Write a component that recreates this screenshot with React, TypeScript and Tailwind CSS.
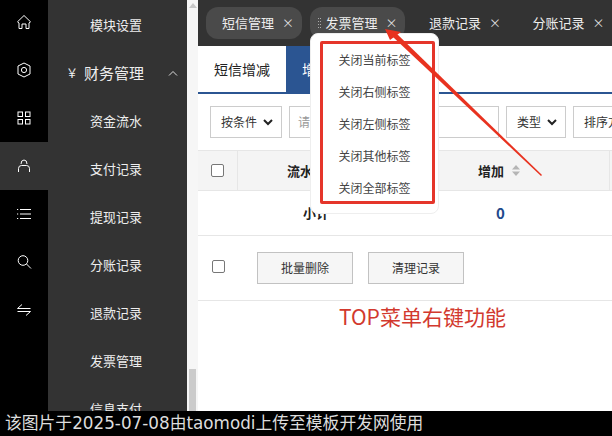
const cjk = "font-['Noto_Sans_CJK_SC','Liberation_Sans',sans-serif]";

function Ico({ children }: { children: React.ReactNode }) {
  return (
    <svg width="18" height="18" viewBox="0 0 18 18" fill="none" stroke="#fff" strokeWidth="1">
      {children}
    </svg>
  );
}

const railIcons = [
  <Ico key="home"><path d="M9 2.5 L2.5 8.8 L4 10 V15.5 H7 V11 H11 V15.5 H14 V10 L15.5 8.8 Z" /></Ico>,
  <Ico key="hex"><path d="M9 2 L15 5 V13 L9 16 L3 13 V5 Z" strokeLinejoin="round" /><circle cx="9" cy="9" r="2.6" /></Ico>,
  <Ico key="grid"><rect x="3" y="3" width="4.5" height="4.5" /><rect x="10.5" y="3" width="4.5" height="4.5" /><rect x="3" y="10.5" width="4.5" height="4.5" /><rect x="10.5" y="10.5" width="4.5" height="4.5" /></Ico>,
  <Ico key="user"><path d="M6 7 A3 4 0 0 1 12 7 M3.5 15 V11.5 Q3.5 8.5 6.5 8.5 H11.5 Q14.5 8.5 14.5 11.5 V15" /></Ico>,
  <Ico key="list"><path d="M5 4.5 H16 M5 9 H16 M5 13.5 H16 M2 4.5 H3.2 M2 9 H3.2 M2 13.5 H3.2" /></Ico>,
  <Ico key="search"><circle cx="8" cy="7.5" r="4.8" /><path d="M11.5 11 L16 15.5" /></Ico>,
  <Ico key="swap"><path d="M7 3.5 L2.5 7.5 H15.5 M11 14.5 L15.5 10.5 H2.5" /></Ico>,
];

const subItems = ["资金流水", "支付记录", "提现记录", "分账记录", "退款记录", "发票管理", "信息支付"];
const menuItems = ["关闭当前标签", "关闭右侧标签", "关闭左侧标签", "关闭其他标签", "关闭全部标签"];

function Chevron({ className }: { className: string }) {
  return (
    <svg className={className} width="10" height="7" viewBox="0 0 10 7" fill="none" stroke="#222" strokeWidth="2">
      <path d="M1 1 L5 5 L9 1" />
    </svg>
  );
}

function Tab({ label, active, grip }: { label: string; active?: boolean; grip?: boolean }) {
  return (
    <div className={`relative flex h-8 w-24 items-center gap-2 rounded-xl pl-4 text-[13px] text-[#eee] ${active ? "bg-[#4a4a4a]" : ""}`}>
      {grip && (
        <span className="absolute left-[8px] top-[11px] grid grid-cols-2 gap-x-[1px] gap-y-[2px]">
          {[0, 1, 2, 3, 4, 5, 6, 7].map((i) => (
            <span key={i} className="h-[1px] w-[1px] bg-[#aaa]" />
          ))}
        </span>
      )}
      <span>{label}</span>
      <span className="text-[12px] leading-none text-[#ddd]">×</span>
    </div>
  );
}

function Select({ label, w }: { label: string; w: string }) {
  return (
    <div className={`flex h-8 shrink-0 items-center justify-between border border-[#ccc] bg-white pl-2.5 pr-2 text-xs text-[#333] ${w}`}>
      <span>{label}</span>
      <Chevron className="shrink-0" />
    </div>
  );
}

export default function App() {
  return (
    <div className={`relative flex h-[436px] w-[612px] overflow-hidden bg-white ${cjk}`}>
      <aside className="flex h-full w-12 shrink-0 flex-col bg-black pt-0">
        <div className="-mt-0.5">
          {railIcons.map((ic, i) => (
            <div key={i} className={`flex h-12 items-center justify-center ${i === 3 ? "bg-[#333]" : ""}`}>
              {ic}
            </div>
          ))}
        </div>
      </aside>

      <nav className="h-full w-[139px] shrink-0 overflow-hidden bg-[#333] pt-[1px] text-[13px] text-[#eee]">
        <div className="flex h-12 items-center pl-[42px]">模块设置</div>
        <div className="flex h-12 items-center pl-[18px] text-[15px]">
          <span className="w-[18px] text-[12px]">￥</span>
          <span>财务管理</span>
          <svg className="ml-[24px]" width="10" height="6" viewBox="0 0 10 6" fill="none" stroke="#ddd">
            <path d="M1 5.5 L5 1.5 L9 5.5" />
          </svg>
        </div>
        {subItems.map((s) => (
          <div key={s} className="flex h-12 items-center pl-[42px]">{s}</div>
        ))}
      </nav>

      <div className="relative h-full w-[11px] shrink-0 bg-[#f6f6f6]">
        <div className="mx-auto mt-[3px] h-0 w-0 border-x-[4px] border-b-[5px] border-x-transparent border-b-[#c8c8c8]" />
        <div className="absolute bottom-[25px] left-[2px] h-[42px] w-[7px] bg-[#cbcbcb]" />
      </div>

      <main className="flex h-full min-w-0 flex-1 flex-col overflow-hidden">
        <header className="flex h-[46px] shrink-0 items-center gap-2 bg-[#333] pl-2">
          <Tab label="短信管理" active />
          <Tab label="发票管理" active grip />
          <Tab label="退款记录" />
          <Tab label="分账记录" />
        </header>

        <div className="flex h-12 shrink-0 border-b-2 border-[#2b5592]">
          <div className="flex w-[88px] items-center justify-center text-sm text-[#222]">短信增减</div>
          <div className="flex w-24 items-center bg-[#2b5592] pl-4 text-sm text-white">增加记录</div>
        </div>

        <div className="flex h-14 shrink-0 items-center gap-[7px] pl-3">
          <Select label="按条件" w="w-[72px]" />
          <div className="flex h-8 w-[210px] shrink-0 items-center border border-[#ccc] pl-2 text-xs text-[#999]">请输入关键词</div>
          <Select label="类型" w="w-[60px]" />
          <div className="flex h-8 w-[100px] shrink-0 items-center overflow-hidden whitespace-nowrap border border-[#ccc] pl-2.5 text-xs text-[#333]">排序方式</div>
        </div>

        <div className="flex h-[41px] shrink-0 items-center border-y border-[#e6e6e6] bg-[#f4f4f4] text-[13px] font-bold text-[#222]">
          <div className="flex h-full w-10 shrink-0 items-center justify-center border-r border-[#e6e6e6]">
            <div className="h-[13px] w-[13px] rounded-[2px] border border-[#777] bg-white" />
          </div>
          <div className="w-[210px] shrink-0 pl-[49px]">流水号</div>
          <div className="flex w-[161px] shrink-0 items-center pl-[30px]">
            <span>增加</span>
            <svg className="ml-2" width="8" height="11" viewBox="0 0 8 11" fill="#b5b5b5">
              <path d="M4 0 L8 4.5 H0 Z M0 6.5 H8 L4 11 Z" />
            </svg>
          </div>
          <div className="h-full flex-1 border-l border-[#e6e6e6]" />
        </div>

        <div className="flex h-[45px] shrink-0 items-center border-b border-[#e6e6e6] text-[13px] font-bold">
          <div className="w-[131px] shrink-0 text-right text-[#222]">小计</div>
          <div className="shrink-0 pl-[167px] text-[15px] text-[#1f4a8c]">0</div>
        </div>

        <div className="flex h-[65px] shrink-0 items-center border-b border-[#e6e6e6]">
          <div className="mb-[3px] ml-3.5 h-[13px] w-[13px] rounded-[2px] border border-[#777] bg-white" />
          <button className="ml-[32px] h-8 w-24 border border-[#c2c2c2] bg-[#f6f6f6] text-xs text-[#333]">批量删除</button>
          <button className="ml-[15px] h-8 w-24 border border-[#c2c2c2] bg-[#f6f6f6] text-xs text-[#333]">清理记录</button>
        </div>
      </main>

      {/* context menu */}
      <div className="absolute left-[310px] top-[33px] h-[181px] w-[129px] rounded-lg border border-[#eee] bg-white">
        <div className="absolute left-[9px] top-[7px] flex h-[163px] w-[115px] flex-col items-center rounded-[2px] border-[3px] border-[#e5352a] pr-[6px] text-xs text-[#444]">
          {menuItems.map((m) => (
            <div key={m} className="flex h-8 shrink-0 items-center">{m}</div>
          ))}
        </div>
      </div>

      {/* annotation arrow */}
      <svg className="pointer-events-none absolute left-0 top-0" width="612" height="436" viewBox="0 0 612 436">
        <polygon points="385,29 401,32 390,40" fill="#e8321f" />
        <polygon points="396,33 393,37 541,176 542,175" fill="#e8321f" />
      </svg>

      <div className="absolute left-[339px] top-[301px] text-[21px] leading-[30px] text-[#d2392e]">TOP菜单右键功能</div>

      <div className="absolute bottom-0 left-0 flex h-[25px] w-full items-center bg-black pl-[5px] font-['DejaVu_Sans','Noto_Sans_CJK_SC',sans-serif] text-[16.8px] text-[#ddd]">
        该图片于2025-07-08由taomodi上传至模板开发网使用
      </div>
    </div>
  );
}
